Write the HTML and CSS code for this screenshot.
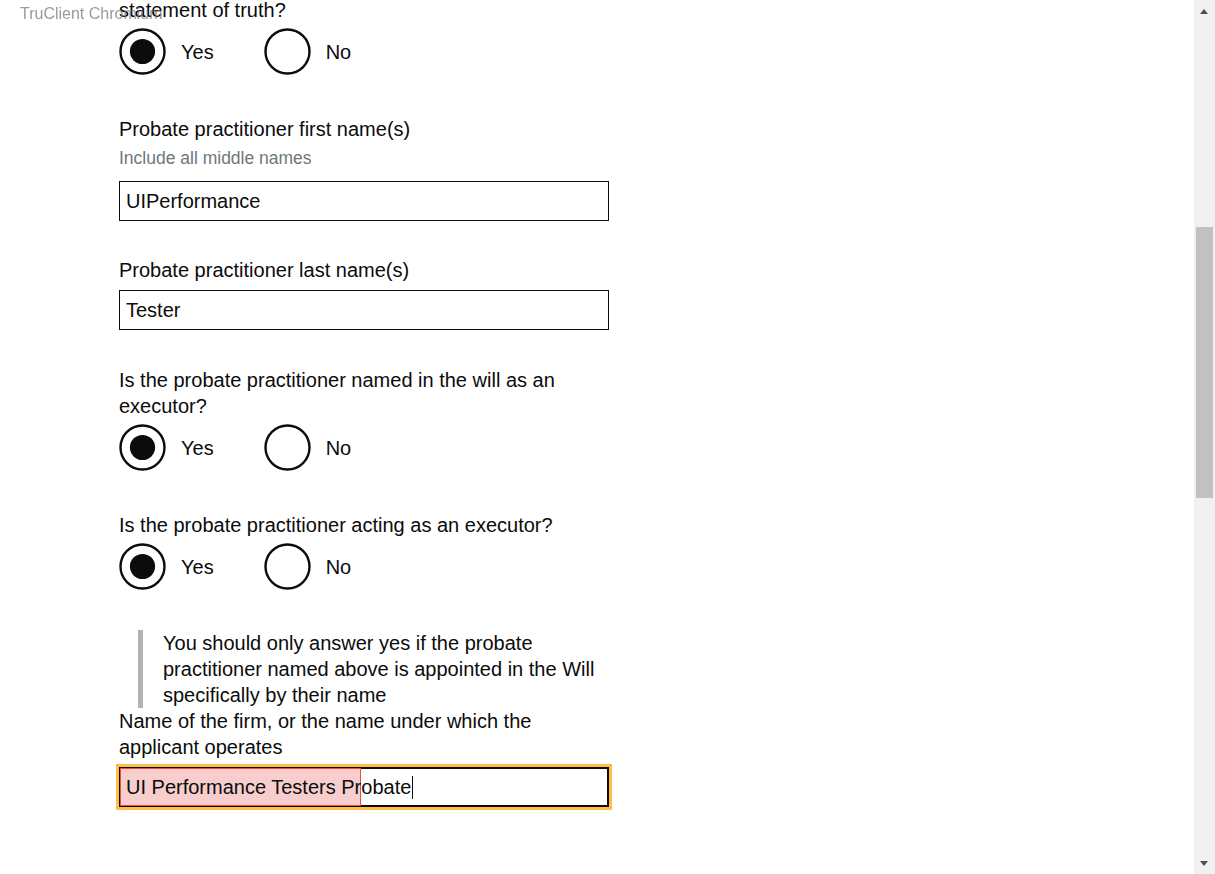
FILE: index.html
```html
<!DOCTYPE html>
<html lang="en">
<head>
<meta charset="utf-8">
<title>Probate practitioner</title>
<link rel="stylesheet" href="styles.css">
</head>
<body>
<div class="tag">TruClient Chromium</div>
<main class="page">
  <div class="group group-radio">
    <div class="label">statement of truth?</div>
    <div class="radios">
      <div class="radio-item">
        <svg class="radio" viewBox="0 0 47 47" width="47" height="47"><circle cx="23.5" cy="23.5" r="22" fill="#fff" stroke="#0b0c0c" stroke-width="2.4"/><circle cx="23.5" cy="23.5" r="12.6" fill="#0b0c0c"/></svg>
        <span class="radio-text">Yes</span>
      </div>
      <div class="radio-item">
        <svg class="radio" viewBox="0 0 47 47" width="47" height="47"><circle cx="23.5" cy="23.5" r="22" fill="#fff" stroke="#0b0c0c" stroke-width="2.4"/></svg>
        <span class="radio-text">No</span>
      </div>
    </div>
  </div>

  <div class="group group-input">
    <div class="label">Probate practitioner first name(s)</div>
    <div class="hint">Include all middle names</div>
    <div class="input">UIPerformance</div>
  </div>

  <div class="group group-input group-input-last">
    <div class="label label-tight">Probate practitioner last name(s)</div>
    <div class="input">Tester</div>
  </div>

  <div class="group group-radio">
    <div class="label">Is the probate practitioner named in the will as an executor?</div>
    <div class="radios">
      <div class="radio-item">
        <svg class="radio" viewBox="0 0 47 47" width="47" height="47"><circle cx="23.5" cy="23.5" r="22" fill="#fff" stroke="#0b0c0c" stroke-width="2.4"/><circle cx="23.5" cy="23.5" r="12.6" fill="#0b0c0c"/></svg>
        <span class="radio-text">Yes</span>
      </div>
      <div class="radio-item">
        <svg class="radio" viewBox="0 0 47 47" width="47" height="47"><circle cx="23.5" cy="23.5" r="22" fill="#fff" stroke="#0b0c0c" stroke-width="2.4"/></svg>
        <span class="radio-text">No</span>
      </div>
    </div>
  </div>

  <div class="group group-radio">
    <div class="label">Is the probate practitioner acting as an executor?</div>
    <div class="radios">
      <div class="radio-item">
        <svg class="radio" viewBox="0 0 47 47" width="47" height="47"><circle cx="23.5" cy="23.5" r="22" fill="#fff" stroke="#0b0c0c" stroke-width="2.4"/><circle cx="23.5" cy="23.5" r="12.6" fill="#0b0c0c"/></svg>
        <span class="radio-text">Yes</span>
      </div>
      <div class="radio-item">
        <svg class="radio" viewBox="0 0 47 47" width="47" height="47"><circle cx="23.5" cy="23.5" r="22" fill="#fff" stroke="#0b0c0c" stroke-width="2.4"/></svg>
        <span class="radio-text">No</span>
      </div>
    </div>
  </div>

  <div class="inset">You should only answer yes if the probate practitioner named above is appointed in the Will specifically by their name</div>

  <div class="group">
    <div class="label label-tight">Name of the firm, or the name under which the applicant operates</div>
    <div class="input input-focus"><span class="highlight"></span><span class="input-text">UI Performance Testers Probate</span><span class="caret"></span></div>
  </div>
</main>

<div class="scrollbar">
  <div class="arrow arrow-up"></div>
  <div class="thumb"></div>
  <div class="arrow arrow-down"></div>
</div>
</body>
</html>
```

FILE: styles.css
```css
html, body {
  margin: 0;
  padding: 0;
  background: #fff;
  overflow: hidden;
  height: 100%;
}

body {
  font-family: "Liberation Sans", Arial, sans-serif;
  color: #0b0c0c;
  font-size: 20px;
  line-height: 26px;
}

.tag {
  position: fixed;
  left: 20px;
  top: 5px;
  font-size: 16px;
  line-height: 18px;
  color: rgba(120, 120, 120, 0.75);
  z-index: 5;
}

.page {
  width: 490px;
  margin: -3px 0 0 119px;
}

.group-radio {
  margin-bottom: 41px;
}

.group-input {
  margin-bottom: 36px;
}

.group-input-last {
  margin-bottom: 37px;
}

.label {
  font-size: 20px;
  line-height: 26px;
}

.label-tight {
  margin-bottom: 7px;
}

.hint {
  font-size: 17.5px;
  line-height: 22px;
  color: #6f777b;
  margin: 5px 0 12px;
}

.radios {
  display: flex;
  margin-top: 5px;
}

.radio-item {
  display: flex;
  align-items: center;
  height: 47px;
  margin-right: 50px;
}

.radio {
  display: block;
  flex: none;
}

.radio-text {
  margin-left: 15px;
}

.input {
  position: relative;
  box-sizing: border-box;
  height: 40px;
  border: 1px solid #0b0c0c;
  padding: 0 6px;
  display: flex;
  align-items: center;
  font-size: 20px;
}

.input-focus {
  height: 40px;
  border-width: 2px;
  outline: 3px solid #ffbf47;
  padding-left: 5px;
}

.highlight {
  position: absolute;
  left: -1px;
  top: -1px;
  width: 241px;
  bottom: -1px;
  box-sizing: border-box;
  background: rgba(224, 60, 60, 0.26);
  border: 1.5px solid #ea4d4a;
}

.input-text {
  position: relative;
}

.caret {
  display: inline-block;
  width: 1px;
  height: 23px;
  background: #0b0c0c;
  margin-left: 1px;
}

.inset {
  margin: -1px 0 0 19px;
  border-left: 5px solid #b1b4b6;
  padding-left: 20px;
  width: 440px;
}

.scrollbar {
  position: fixed;
  top: 0;
  right: 0;
  width: 21px;
  height: 100%;
  background: #f1f1f1;
}

.thumb {
  position: absolute;
  left: 2px;
  width: 17px;
  top: 227px;
  height: 271px;
  background: #c1c1c1;
}

.arrow {
  position: absolute;
  left: 6px;
  width: 0;
  height: 0;
  border-left: 4.5px solid transparent;
  border-right: 4.5px solid transparent;
}

.arrow-up {
  top: 9px;
  border-bottom: 5px solid #505050;
}

.arrow-down {
  bottom: 8px;
  border-top: 5px solid #505050;
}
```
